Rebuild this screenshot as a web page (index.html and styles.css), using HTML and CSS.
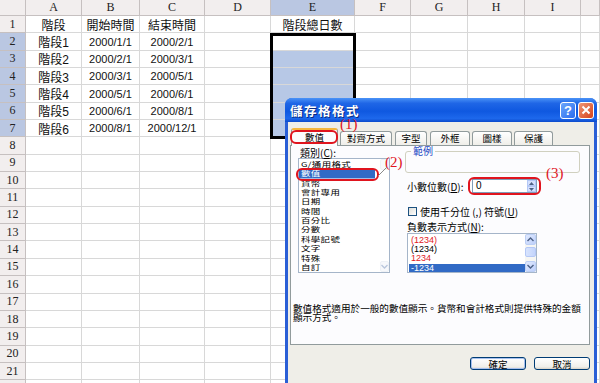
FILE: index.html
```html
<!DOCTYPE html>
<html lang="zh-Hant">
<head>
    <meta charset="UTF-8">
    <title>儲存格格式 - 數值</title>
    <link rel="stylesheet" href="styles.css">
</head>
<body>

<div class="sheet">
    <div class="hd"></div><div class="hd">A</div><div class="hd">B</div><div class="hd">C</div><div class="hd">D</div><div class="hd on">E</div><div class="hd">F</div><div class="hd">G</div><div class="hd">H</div><div class="hd">I</div><div class="hd"></div>
    <div class="rh">1</div><div>階段</div><div>開始時間</div><div>結束時間</div><div></div><div>階段總日數</div><div></div><div></div><div></div><div></div><div></div>
    <div class="rh on">2</div><div>階段1</div><div class="num">2000/1/1</div><div class="num">2000/2/1</div><div></div><div></div><div></div><div></div><div></div><div></div><div></div>
    <div class="rh on">3</div><div>階段2</div><div class="num">2000/2/1</div><div class="num">2000/3/1</div><div></div><div class="sel"></div><div></div><div></div><div></div><div></div><div></div>
    <div class="rh on">4</div><div>階段3</div><div class="num">2000/3/1</div><div class="num">2000/5/1</div><div></div><div class="sel"></div><div></div><div></div><div></div><div></div><div></div>
    <div class="rh on">5</div><div>階段4</div><div class="num">2000/5/1</div><div class="num">2000/6/1</div><div></div><div class="sel"></div><div></div><div></div><div></div><div></div><div></div>
    <div class="rh on">6</div><div>階段5</div><div class="num">2000/6/1</div><div class="num">2000/8/1</div><div></div><div class="sel"></div><div></div><div></div><div></div><div></div><div></div>
    <div class="rh on">7</div><div>階段6</div><div class="num">2000/8/1</div><div class="num">2000/12/1</div><div></div><div class="sel"></div><div></div><div></div><div></div><div></div><div></div>
    <div class="rh">8</div><div></div><div></div><div></div><div></div><div></div><div></div><div></div><div></div><div></div><div></div>
    <div class="rh">9</div><div></div><div></div><div></div><div></div><div></div><div></div><div></div><div></div><div></div><div></div>
    <div class="rh">10</div><div></div><div></div><div></div><div></div><div></div><div></div><div></div><div></div><div></div><div></div>
    <div class="rh">11</div><div></div><div></div><div></div><div></div><div></div><div></div><div></div><div></div><div></div><div></div>
    <div class="rh">12</div><div></div><div></div><div></div><div></div><div></div><div></div><div></div><div></div><div></div><div></div>
    <div class="rh">13</div><div></div><div></div><div></div><div></div><div></div><div></div><div></div><div></div><div></div><div></div>
    <div class="rh">14</div><div></div><div></div><div></div><div></div><div></div><div></div><div></div><div></div><div></div><div></div>
    <div class="rh">15</div><div></div><div></div><div></div><div></div><div></div><div></div><div></div><div></div><div></div><div></div>
    <div class="rh">16</div><div></div><div></div><div></div><div></div><div></div><div></div><div></div><div></div><div></div><div></div>
    <div class="rh">17</div><div></div><div></div><div></div><div></div><div></div><div></div><div></div><div></div><div></div><div></div>
    <div class="rh">18</div><div></div><div></div><div></div><div></div><div></div><div></div><div></div><div></div><div></div><div></div>
    <div class="rh">19</div><div></div><div></div><div></div><div></div><div></div><div></div><div></div><div></div><div></div><div></div>
    <div class="rh">20</div><div></div><div></div><div></div><div></div><div></div><div></div><div></div><div></div><div></div><div></div>
    <div class="rh">21</div><div></div><div></div><div></div><div></div><div></div><div></div><div></div><div></div><div></div><div></div>
    <div class="rh"></div><div></div><div></div><div></div><div></div><div></div><div></div><div></div><div></div><div></div><div></div>
</div>

<!-- 選取範圍 E2:E7 -->
<div class="selection"></div>

<div class="dialog">
    <div class="titlebar">
        <span class="title">儲存格格式</span>
        <span class="tb-btn help">?</span>
        <span class="tb-btn close">
            <svg width="10" height="10" viewBox="0 0 10 10"><path d="M1.5 1.5 L8.5 8.5 M8.5 1.5 L1.5 8.5" stroke="#fff" stroke-width="2"/></svg>
        </span>
    </div>

    <div class="dlg-body">
        <div class="tabs">
            <div class="tab active w47">數值</div>
            <div class="tab w52">對齊方式</div>
            <div class="tab w32">字型</div>
            <div class="tab w40 gap2">外框</div>
            <div class="tab w40 gap2">圖樣</div>
            <div class="tab w39">保護</div>
        </div>

        <div class="panel">
            <div class="cols">
                <div class="cat">
                    <div class="lbl">類別(<u>C</u>):</div>
                    <div class="listbox cat-list">
                        <div class="items">
                            <div class="item">G/通用格式</div>
                            <div class="item selected">數值</div>
                            <div class="item">貨幣</div>
                            <div class="item">會計專用</div>
                            <div class="item">日期</div>
                            <div class="item">時間</div>
                            <div class="item">百分比</div>
                            <div class="item">分數</div>
                            <div class="item">科學記號</div>
                            <div class="item">文字</div>
                            <div class="item">特殊</div>
                            <div class="item">自訂</div>
                        </div>
                        <div class="vscroll faint">
                            <span class="sb-btn"></span>
                            <span class="sb-btn">
                                <svg width="7" height="5" viewBox="0 0 7 5"><path d="M0.5 1 L3.5 4 L6.5 1" fill="none" stroke="#b9c6dc" stroke-width="1.3"/></svg>
                            </span>
                        </div>
                    </div>
                </div>

                <div class="opts">
                    <fieldset class="sample">
                        <legend>範例</legend>
                        <div class="sample-box"></div>
                    </fieldset>

                    <div class="row">
                        <span class="row-lbl">小數位數(<u>D</u>):</span>
                        <div class="spin">
                            <span class="spin-val">0</span>
                            <div class="spin-btns">
                                <span><svg width="5" height="3" viewBox="0 0 5 3"><path d="M0 3 L2.5 0 L5 3 Z" fill="#4d6185"/></svg></span>
                                <span><svg width="5" height="3" viewBox="0 0 5 3"><path d="M0 0 L2.5 3 L5 0 Z" fill="#4d6185"/></svg></span>
                            </div>
                        </div>
                    </div>

                    <div class="row chk">
                        <span class="checkbox"></span>
                        <span>使用千分位 (,) 符號(<u>U</u>)</span>
                    </div>

                    <div class="lbl neg-lbl">負數表示方式(<u>N</u>):</div>
                    <div class="listbox neg-list">
                        <div class="items">
                            <div class="item red">(1234)</div>
                            <div class="item">(1234)</div>
                            <div class="item red">1234</div>
                            <div class="item selected">-1234</div>
                        </div>
                        <div class="vscroll">
                            <span class="sb-btn">
                                <svg width="7" height="5" viewBox="0 0 7 5"><path d="M0.5 4 L3.5 1 L6.5 4" fill="none" stroke="#4d6185" stroke-width="1.4"/></svg>
                            </span>
                            <span class="sb-thumb"></span>
                            <span class="sb-btn">
                                <svg width="7" height="5" viewBox="0 0 7 5"><path d="M0.5 1 L3.5 4 L6.5 1" fill="none" stroke="#4d6185" stroke-width="1.4"/></svg>
                            </span>
                        </div>
                    </div>
                </div>
            </div>

            <p class="desc">數值格式適用於一般的數值顯示。貨幣和會計格式則提供特殊的金額顯示方式。</p>
        </div>

        <div class="buttons">
            <button class="btn default">確定</button>
            <button class="btn">取消</button>
        </div>
    </div>

    <!-- 標示 (1)(2)(3) -->
    <span class="mark m1"></span>
    <span class="mark m2"></span>
    <span class="mark m3"></span>
    <span class="step s1">(1)</span>
    <span class="step s2">(2)</span>
    <span class="step s3">(3)</span>
    <svg class="leader" width="12" height="12" viewBox="0 0 12 12"><path d="M1 11 L10 2" stroke="#8a8a8a" stroke-width="1"/></svg>
</div>

</body>
</html>
```

FILE: styles.css
```css
body {
    margin: 0;
    width: 600px;
    height: 383px;
    overflow: hidden;
    position: relative;
    background: #fff;
    font-family: "Liberation Sans", "Noto Sans CJK TC", sans-serif;
}

/* 工作表 */
.sheet {
    display: grid;
    grid-template-columns: 26px 56px 58px 65px 66px 84px 56px 57px 57px 56px 19px;
    grid-template-rows: 16px;
    grid-auto-rows: 17.35px;
    font-size: 12px;
    color: #111;
}
.sheet > div {
    box-sizing: border-box;
    display: flex;
    align-items: center;
    justify-content: center;
    border-right: 1px solid #d8d8d8;
    border-bottom: 1px solid #d8d8d8;
    white-space: nowrap;
    overflow: hidden;
}
.sheet .num {
    font-size: 11px;
}
.sheet .hd,
.sheet .rh {
    background: #f2eeee;
    border-color: #c6c0c0;
    font-family: "Liberation Serif", serif;
    font-size: 12px;
    color: #222;
}
.sheet .on {
    background: #bac7e2;
}
.sheet .sel {
    background: #b7c8e6;
}
.selection {
    position: absolute;
    left: 270px;
    top: 33px;
    width: 86px;
    height: 106px;
    box-sizing: border-box;
    border: 3px solid #000;
}

/* 對話方塊 */
.dialog {
    position: absolute;
    left: 285px;
    top: 98px;
    width: 312px;
    height: 290px;
    background: #2a5fd6;
    border-radius: 7px 7px 0 0;
    font-family: "Noto Sans CJK TC", "Liberation Sans", sans-serif;
    font-size: 10px;
    color: #000;
}
.titlebar {
    height: 24px;
    display: flex;
    align-items: center;
    padding: 0 3px 0 5px;
    border-radius: 7px 7px 0 0;
    background: linear-gradient(#4a93f7, #1f66e6 22%, #0f58e0 55%, #1d68ec 85%, #0d4bcc);
}
.title {
    flex: 1;
    color: #fff;
    font-weight: bold;
    font-size: 12.5px;
    letter-spacing: 1.5px;
    text-shadow: 1px 1px 0 #0a2a80;
}
.tb-btn {
    width: 16px;
    height: 17px;
    box-sizing: border-box;
    margin-left: 2px;
    border: 1px solid #fff;
    border-radius: 3px;
    display: flex;
    align-items: center;
    justify-content: center;
    color: #fff;
    font: bold 13px "Liberation Sans", sans-serif;
}
.help {
    background: linear-gradient(135deg, #6aa6fb, #2b6cef);
}
.close {
    background: linear-gradient(135deg, #ef9676, #d6431c);
}

.dlg-body {
    margin: 0 3px;
    height: 262px;
    box-sizing: border-box;
    padding: 6px 0 0 2px;
    background: #efeee8;
}
.tabs {
    display: flex;
    align-items: flex-end;
    height: 17px;
    padding-left: 1px;
}
.tab {
    height: 14px;
    box-sizing: border-box;
    margin-right: 3px;
    border: 1px solid #919b9c;
    border-bottom: none;
    border-radius: 3px 3px 0 0;
    background: linear-gradient(#fff, #efeee9);
    display: flex;
    align-items: center;
    justify-content: center;
    font-size: 9.5px;
    line-height: 1;
}
.tab.active {
    height: 18px;
    margin-bottom: -1px;
    margin-right: 2px;
    position: relative;
    background: #fcfcfe;
    border-top: 2px solid #f5b63d;
}
.w47 { width: 47px; }
.w52 { width: 52px; }
.w32 { width: 32px; }
.w40 { width: 40px; }
.w39 { width: 39px; }
.gap2 { margin-right: 2px; }

.panel {
    width: 300px;
    height: 200px;
    box-sizing: border-box;
    padding: 1px 0 0 2px;
    border: 1px solid #919b9c;
    background: #fcfcfe;
}
.cols {
    display: flex;
    padding-left: 5px;
}
.cat {
    width: 92px;
}
.opts {
    width: 180px;
    margin-left: 15px;
}
.lbl {
    height: 11px;
    line-height: 11px;
    padding-left: 2px;
}

.listbox {
    display: flex;
    box-sizing: border-box;
    border: 1px solid #a5b5c9;
    background: #fff;
    overflow: hidden;
}
.items {
    flex: 1;
    padding-top: 1.5px;
}
.item {
    line-height: 9.4px;
    height: 9.4px;
    padding-left: 2px;
    white-space: nowrap;
}
.item.selected {
    background: #316ac5;
    color: #fff;
}
.item.red {
    color: #e0201e;
}
.cat-list {
    height: 115px;
}
/* 原圖的類別清單字形較扁 */
.cat-list .items {
    padding-top: 1px;
    transform: scaleY(0.72);
    transform-origin: 0 0;
}
.cat-list .item {
    width: 74px;
    height: 13px;
    line-height: 13px;
    font-size: 9.5px;
    letter-spacing: 0.3px;
}

.vscroll {
    width: 11px;
    display: flex;
    flex-direction: column;
    justify-content: space-between;
    background: #f6f6f3;
}
.vscroll.faint {
    width: 9px;
    background: #fff;
}
.sb-btn {
    height: 11px;
    box-sizing: border-box;
    display: flex;
    align-items: center;
    justify-content: center;
    border: 1px solid #bccff5;
    border-radius: 2px;
    background: linear-gradient(135deg, #e1eafe, #bdcffb);
}
.faint .sb-btn {
    border-color: #eef1f6;
    background: #f7f8fb;
}
.sb-thumb {
    height: 10px;
    margin-top: 2px;
    margin-bottom: auto;
    box-sizing: border-box;
    border: 1px solid #b4c8f6;
    border-radius: 2px;
    background: linear-gradient(90deg, #d8e4fd, #c3d4fc);
}

.sample {
    width: 175px;
    margin: 0;
    padding: 0;
    box-sizing: border-box;
    border: 1px solid #d0d0bf;
    border-radius: 3px;
}
.sample legend {
    margin-left: 5px;
    padding: 0 2px;
    line-height: 8px;
    font-size: 10px;
    color: #1c48c4;
}
.sample-box {
    height: 17px;
}

.row {
    display: flex;
    align-items: center;
    height: 14px;
    margin-top: 6px;
    padding-left: 2px;
}
.row-lbl {
    width: 65px;
}
.spin {
    display: flex;
    width: 65px;
    height: 14px;
    box-sizing: border-box;
    border: 1px solid #7f9db9;
    background: #fff;
}
.spin-val {
    flex: 1;
    padding-left: 3px;
    line-height: 12px;
    font-family: "Liberation Sans", sans-serif;
    font-size: 10px;
}
.spin-btns {
    width: 9px;
    display: flex;
    flex-direction: column;
}
.spin-btns span {
    flex: 1;
    display: flex;
    align-items: center;
    justify-content: center;
    border: 1px solid #b4c8f6;
    background: #d5e0fd;
}

.chk {
    height: 10px;
    margin-top: 13px;
}
.checkbox {
    width: 9px;
    height: 9px;
    box-sizing: border-box;
    margin: 0 3px 0 1px;
    border: 1px solid #1c5180;
    background: linear-gradient(135deg, #dcdcd7, #fff);
}
.neg-lbl {
    height: 9px;
    line-height: 9px;
    margin-top: 6px;
}
.neg-list {
    width: 130px;
    height: 40px;
    margin: 2px 0 0 2px;
    font-family: "Liberation Sans", sans-serif;
    font-size: 9px;
}
.neg-list .items {
    padding-left: 1px;
}

.desc {
    width: 292px;
    margin: 31px 0 0;
    font-size: 9.6px;
    line-height: 9px;
}

.buttons {
    display: flex;
    justify-content: flex-end;
    gap: 8px;
    margin-top: 12px;
    padding-right: 4px;
}
.btn {
    width: 56px;
    height: 13px;
    padding: 0;
    box-sizing: border-box;
    border: 1px solid #003c74;
    border-radius: 3px;
    background: linear-gradient(#fff, #f0efea 80%, #d8d2c6);
    font-family: "Noto Sans CJK TC", sans-serif;
    font-size: 9.5px;
    line-height: 10px;
    color: #000;
}
.btn.default {
    box-shadow: inset 0 0 0 1px #a7c0ee;
}

/* 紅色標示 */
.mark {
    position: absolute;
    box-sizing: border-box;
    border: 2px solid #e0141e;
    border-radius: 6px;
}
.m1 { left: 5px; top: 32px; width: 48px; height: 14px; }
.m2 { left: 11px; top: 70px; width: 83px; height: 13px; }
.m3 { left: 183px; top: 79px; width: 73px; height: 18px; }
.step {
    position: absolute;
    color: #e0141e;
    font-family: "Liberation Serif", serif;
    font-size: 15px;
    line-height: 15px;
}
.s1 { left: 55px; top: 19px; }
.s2 { left: 100px; top: 57px; }
.s3 { left: 261px; top: 68px; }
.leader {
    position: absolute;
    left: 92px;
    top: 67px;
}
```
